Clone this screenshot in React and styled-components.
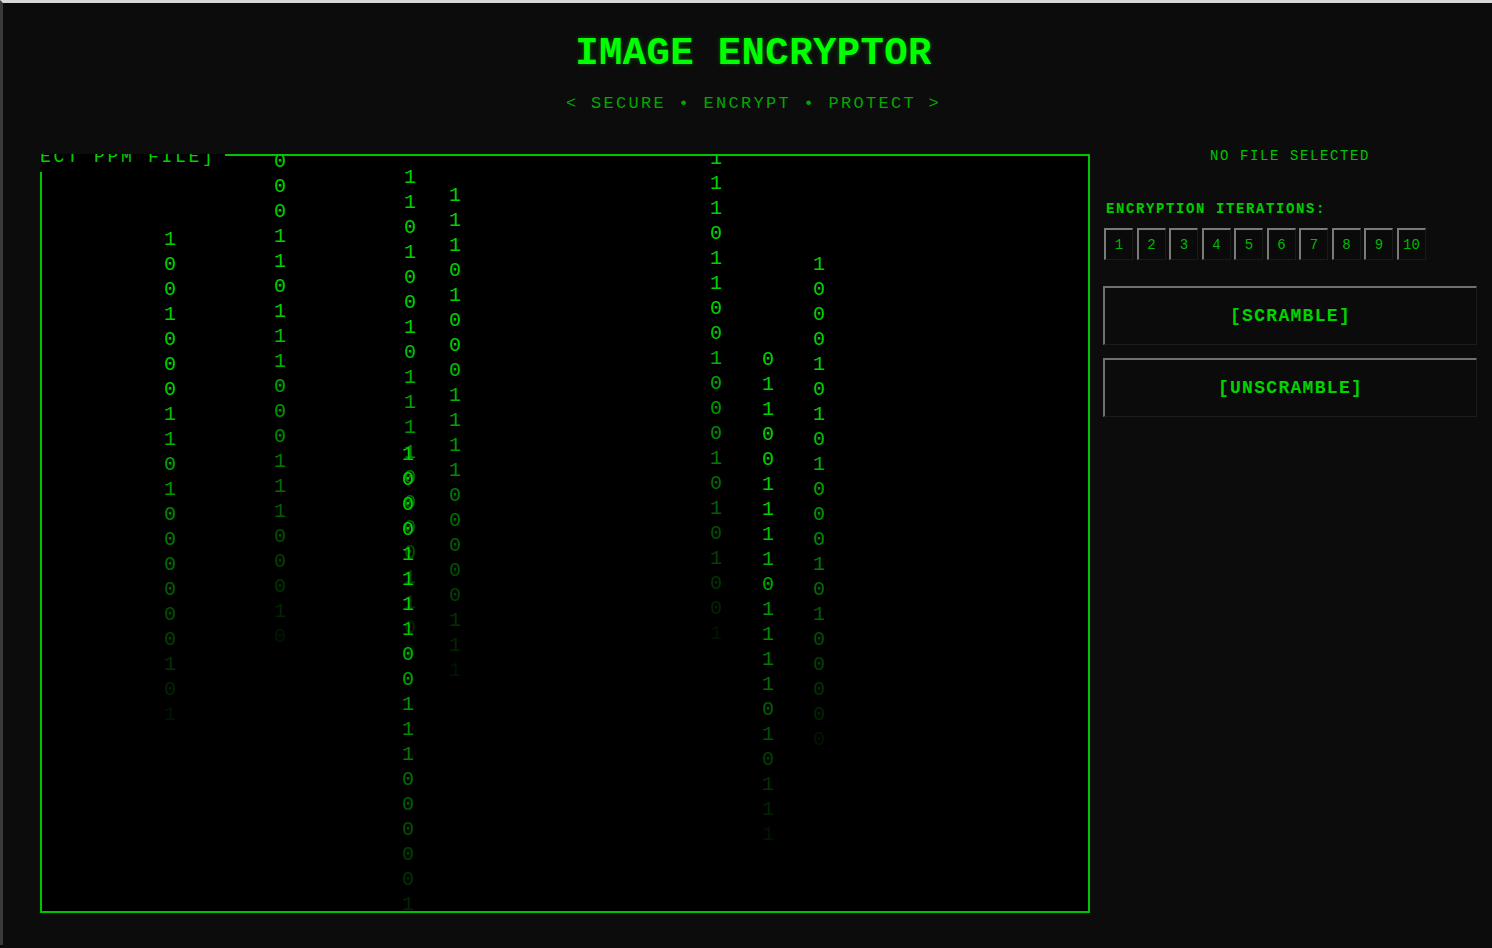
import React from 'react';
import styled, { createGlobalStyle } from 'styled-components';

const GlobalStyle = createGlobalStyle`
  html, body {
    margin: 0;
    padding: 0;
    background: #0c0c0c;
  }
  body {
    font-family: "Liberation Mono", "Courier New", monospace;
    border-top: 3px solid #d8d8d8;
    border-left: 3px solid #3a3a3a;
    min-height: 945px;
    box-sizing: border-box;
  }
`;

const Page = styled.div`
  display: flex;
  flex-direction: column;
  padding: 0 15px 0 37px;
`;

const Header = styled.header`
  display: flex;
  flex-direction: column;
  align-items: center;
  padding-top: 29px;
  margin-right: 10px;
`;

const Title = styled.h1`
  margin: 0;
  font-size: 39px;
  line-height: 44px;
  font-weight: bold;
  letter-spacing: 0.35px;
  color: #00ff00;
  text-shadow: 0 0 4px rgba(0, 255, 0, 0.35);
`;

const Tagline = styled.div`
  margin-top: 18px;
  font-size: 17px;
  line-height: 20px;
  letter-spacing: 2.3px;
  color: #00a800;
`;

const Main = styled.main`
  display: grid;
  grid-template-columns: 1050px 374px;
  column-gap: 13px;
  margin-top: 30px;
  align-items: start;
`;

const Viewport = styled.section`
  position: relative;
  margin-top: 10px;
  height: 759px;
  background: #000;
  overflow: hidden;
  box-shadow: inset 0 0 0 2px #00c400;
`;

const Legend = styled.span`
  position: absolute;
  top: -10px;
  left: -54px;
  height: 28px;
  line-height: 26px;
  padding-right: 9px;
  background: #000;
  font-size: 18px;
  letter-spacing: 2.7px;
  color: #00d000;
  white-space: nowrap;
`;

const RainColumn = styled.div`
  position: absolute;
  display: flex;
  flex-direction: column;
  width: 12px;
`;

const Digit = styled.span`
  font-size: 20px;
  line-height: 25px;
  height: 25px;
  color: #00d000;
`;

const Side = styled.aside`
  display: flex;
  flex-direction: column;
  padding-top: 2px;
`;

const Status = styled.div`
  text-align: center;
  font-size: 14px;
  line-height: 20px;
  letter-spacing: 1.6px;
  color: #00c400;
`;

const Label = styled.div`
  margin-top: 33px;
  padding-left: 3px;
  font-size: 14px;
  line-height: 20px;
  font-weight: bold;
  letter-spacing: 1.6px;
  color: #00cc00;
`;

const Iterations = styled.div`
  display: flex;
  gap: 3.5px;
  margin-top: 9px;
  padding-left: 1px;
`;

const IterButton = styled.button`
  width: 29px;
  height: 32px;
  padding: 0;
  box-sizing: border-box;
  background: #0a0a0a;
  border-style: solid;
  border-width: 2px 1px 1px 2px;
  border-color: #7a7a7a #1a1a1a #1a1a1a #7a7a7a;
  font-family: "Liberation Mono", "Courier New", monospace;
  font-size: 14px;
  color: #00b800;
  cursor: pointer;
`;

const Action = styled.button`
  height: 59px;
  margin-top: ${(p) => p.$gap}px;
  box-sizing: border-box;
  background: #0b0b0b;
  border-style: solid;
  border-width: 2px 1px 1px 2px;
  border-color: #707070 #1c1c1c #1c1c1c #707070;
  font-family: "Liberation Mono", "Courier New", monospace;
  font-size: 18px;
  font-weight: bold;
  letter-spacing: 1.3px;
  color: #00d400;
  cursor: pointer;
`;

const PANEL_X = 40;
const PANEL_Y = 154;

const columns = [
  { x: 170, y: 238, bits: '10010001101000000101' },
  { x: 280, y: 160, bits: '00011011100011100010' },
  { x: 410, y: 176, bits: '11010010111100001100' },
  { x: 408, y: 453, bits: '10001111001110000010' },
  { x: 455, y: 194, bits: '11101000111100000111' },
  { x: 716, y: 157, bits: '11101100100010101001' },
  { x: 768, y: 358, bits: '01100111101111010111' },
  { x: 819, y: 263, bits: '10001010100010100000' },
];

const fade = (i) => (i < 6 ? 1 : Math.max(0.08, 1 - ((i - 6) / 13) * 0.9));

function App() {
  return (
    <>
      <GlobalStyle />
      <Page>
        <Header>
          <Title>IMAGE ENCRYPTOR</Title>
          <Tagline>&lt; SECURE • ENCRYPT • PROTECT &gt;</Tagline>
        </Header>
        <Main>
          <Viewport>
            <Legend>[SELECT PPM FILE]</Legend>
            {columns.map((c, ci) => (
              <RainColumn
                key={ci}
                style={{ left: c.x - PANEL_X - 6, top: c.y - PANEL_Y - 11 }}
              >
                {c.bits.split('').map((b, i) => (
                  <Digit key={i} style={{ opacity: fade(i) }}>{b}</Digit>
                ))}
              </RainColumn>
            ))}
          </Viewport>
          <Side>
            <Status>NO FILE SELECTED</Status>
            <Label>ENCRYPTION ITERATIONS:</Label>
            <Iterations>
              {[1, 2, 3, 4, 5, 6, 7, 8, 9, 10].map((n) => (
                <IterButton key={n}>{n}</IterButton>
              ))}
            </Iterations>
            <Action $gap={26}>[SCRAMBLE]</Action>
            <Action $gap={13}>[UNSCRAMBLE]</Action>
          </Side>
        </Main>
      </Page>
    </>
  );
}

export default App;
